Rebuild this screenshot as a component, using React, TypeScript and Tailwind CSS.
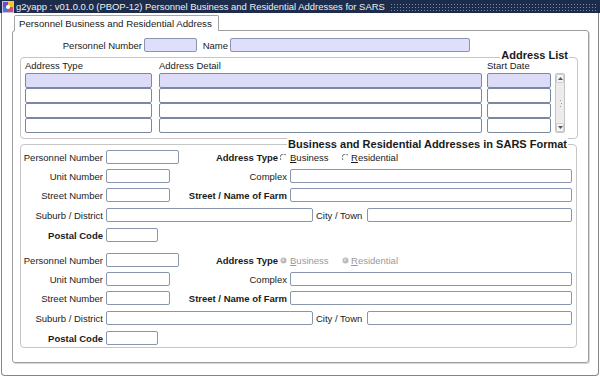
import React from "react";

const inputBase =
  "h-[14px] border border-[#8a96ad] rounded-[2px] bg-white shrink-0";

function Radio({ disabled }: { disabled?: boolean }) {
  if (disabled) {
    return (
      <svg width="7" height="7" viewBox="0 0 7 7" className="shrink-0">
        <circle cx="3.5" cy="3.5" r="3" fill="#b8b8b8" />
        <circle cx="3" cy="3" r="1.4" fill="#d8d8d8" />
      </svg>
    );
  }
  return (
    <svg width="7" height="7" viewBox="0 0 7 7" className="shrink-0">
      <path d="M1 6 A3 3 0 0 1 6 1" fill="none" stroke="#6b6b6b" strokeWidth="1" />
    </svg>
  );
}

function SarsBlock({ disabled, first }: { disabled?: boolean; first?: boolean }) {
  const radioText = disabled ? "text-[#9a9a9a]" : "text-[#1a1a1a]";
  return (
    <div className={first ? "mt-[5px]" : "mt-[11px]"}>
      <div className="flex items-center h-[14px]">
        <div className="w-[82px] text-right">Personnel Number</div>
        <div className={`${inputBase} ml-[3px] w-[73px]`} />
        <div className="w-[99px] text-right font-bold">Address Type</div>
        <div className="ml-[2px] flex items-center">
          <Radio disabled={disabled} />
        </div>
        <div className={`ml-[3px] w-[52px] ${radioText}`}>
          <span className="underline">B</span>usiness
        </div>
        <Radio disabled={disabled} />
        <div className={`ml-[2px] ${radioText}`}>
          <span className="underline">R</span>esidential
        </div>
      </div>
      <div className="flex items-center h-[14px] mt-[5px]">
        <div className="w-[82px] text-right">Unit Number</div>
        <div className={`${inputBase} ml-[3px] w-[64px]`} />
        <div className="w-[117px] text-right">Complex</div>
        <div className={`${inputBase} ml-[3px] w-[282px]`} />
      </div>
      <div className="flex items-center h-[14px] mt-[5px]">
        <div className="w-[82px] text-right">Street Number</div>
        <div className={`${inputBase} ml-[3px] w-[64px]`} />
        <div className="w-[117px] text-right font-bold">Street / Name of Farm</div>
        <div className={`${inputBase} ml-[3px] w-[282px]`} />
      </div>
      <div className="flex items-center h-[14px] mt-[6px]">
        <div className="w-[82px] text-right">Suburb / District</div>
        <div className={`${inputBase} ml-[3px] w-[207px]`} />
        <div className="ml-[3px] w-[48px]">City / Town</div>
        <div className={`${inputBase} ml-[3px] w-[205px]`} />
      </div>
      <div className="flex items-center h-[14px] mt-[6px]">
        <div className="w-[82px] text-right font-bold">Postal Code</div>
        <div className={`${inputBase} ml-[3px] w-[52px]`} />
      </div>
    </div>
  );
}

export default function App() {
  const rowInput =
    "h-[15px] border border-[#7b88a2] rounded-[2px] shrink-0";
  return (
    <div className="w-[600px] h-[381px] bg-white overflow-hidden font-['Liberation_Sans',Arial,sans-serif] text-[9.5px] leading-[11px] text-[#1a1a1a]">
      {/* Title bar */}
      <div className="h-[13px] bg-[#1e2c4b] flex items-center">
        <svg width="12" height="12" viewBox="0 0 12 12" className="ml-[2px] shrink-0">
          <rect x="0" y="0" width="12" height="12" fill="#c9c2e6" />
          <rect x="1" y="1" width="5" height="5" fill="#6a4fc0" />
          <rect x="6" y="1" width="5" height="5" fill="#f2c23a" />
          <rect x="1" y="6" width="5" height="5" fill="#3a7fd0" />
          <rect x="6" y="6" width="5" height="5" fill="#d04a7a" />
          <circle cx="6" cy="6" r="2" fill="#ffffff" />
        </svg>
        <div className="ml-[2px] text-[9.45px] leading-[12px] text-[#eef0f4] whitespace-nowrap">
          g2yapp : v01.0.0.0 (PBOP-12) Personnel Business and Residential Addresses for SARS
        </div>
        <div className="flex-1 ml-[5px] mr-[2px] h-[8px] bg-[radial-gradient(circle,#7d8cab_0.7px,transparent_0.9px)] bg-[length:3px_3px]" />
      </div>

      {/* Window body */}
      <div className="ml-[1px] mr-[1px] h-[363px] border-x border-b border-[#858585] rounded-b-[4px] pl-[10px] pr-[9px] pt-[2px]">
        {/* Tab */}
        <div className="relative z-10 ml-[2px] w-[205px] h-[16px] -mb-[1px] border border-b-0 border-[#a4a4a4] rounded-t-[2px] bg-white pl-[4px] flex items-center text-[9.7px]">
          Personnel Business and Residential Address
        </div>
        {/* Panel */}
        <div className="h-[333px] border border-[#9e9e9e] rounded-[3px] pt-[7px] shadow-[1px_1px_0_#d8d8d8]">
          <div className="flex items-center h-[14px]">
            <div className="w-[129px] text-right">Personnel Number</div>
            <div className="ml-[2px] w-[53px] h-[14px] border border-[#8a96ad] rounded-[2px] bg-[#dfdffb]" />
            <div className="w-[31px] text-right">Name</div>
            <div className="ml-[2px] w-[240px] h-[14px] border border-[#8a96ad] rounded-[2px] bg-[#dfdffb]" />
          </div>

          {/* Address List */}
          <div className="relative ml-[7px] mt-[5px] w-[558px] border border-[#c6c6c6] rounded-[4px] pl-[4px] pb-[5px]">
            <div className="absolute -top-[8px] right-[8px] bg-white px-[1px] text-[11px] leading-[11px] font-bold">
              Address List
            </div>
            <div className="flex items-end h-[15px] pb-[2px]">
              <div className="w-[127px]">Address Type</div>
              <div className="ml-[7px] w-[323px]">Address Detail</div>
              <div className="ml-[5px] w-[64px] leading-[10px]">Start Date</div>
            </div>
            <div className="flex">
              <div className="flex flex-col">
                {[0, 1, 2, 3].map((i) => (
                  <div key={i} className="flex">
                    <div className={`${rowInput} w-[127px] ${i === 0 ? "bg-[#dcdcf8]" : "bg-white"}`} />
                    <div className={`${rowInput} ml-[7px] w-[323px] ${i === 0 ? "bg-[#dcdcf8]" : "bg-white"}`} />
                    <div className={`${rowInput} ml-[5px] w-[64px] ${i === 0 ? "bg-[#dcdcf8]" : "bg-white"}`} />
                  </div>
                ))}
              </div>
              {/* Scrollbar */}
              <div className="ml-[4px] w-[10px] h-[60px] border border-[#c4c4c4] rounded-[2px] bg-[#ececec] flex flex-col items-center justify-between">
                <div className="w-[8px] h-[9px] bg-[#f4f4f4] border border-[#cfcfcf] rounded-[1px] flex items-center justify-center">
                  <svg width="5" height="3" viewBox="0 0 5 3">
                    <path d="M0 3 L2.5 0 L5 3 Z" fill="#555" />
                  </svg>
                </div>
                <div className="flex flex-col items-center gap-[2px]">
                  <div className="w-[1px] h-[1px] bg-[#9a9a9a]" />
                  <div className="w-[1px] h-[1px] bg-[#9a9a9a] translate-x-[1px]" />
                  <div className="w-[1px] h-[1px] bg-[#9a9a9a]" />
                </div>
                <div className="w-[8px] h-[9px] bg-[#f4f4f4] border border-[#cfcfcf] rounded-[1px] flex items-center justify-center">
                  <svg width="5" height="3" viewBox="0 0 5 3">
                    <path d="M0 0 L2.5 3 L5 0 Z" fill="#555" />
                  </svg>
                </div>
              </div>
            </div>
          </div>

          {/* SARS Format */}
          <div className="relative ml-[7px] mt-[5px] w-[557px] border border-[#c6c6c6] rounded-[4px] pb-[2px]">
            <div className="absolute -top-[7px] right-[8px] bg-white px-[1px] text-[11px] leading-[12px] font-bold">
              Business and Residential Addresses in SARS Format
            </div>
            <SarsBlock first />
            <SarsBlock disabled />
          </div>
        </div>
      </div>
    </div>
  );
}
